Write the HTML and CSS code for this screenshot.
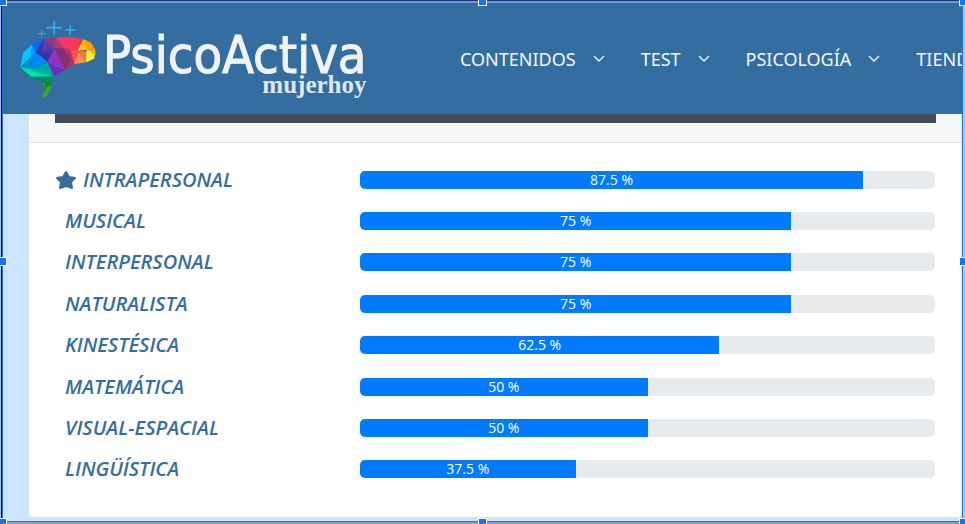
FILE: index.html
```
<!DOCTYPE html>
<html lang="es">
<head>
<meta charset="utf-8">
<meta name="viewport" content="width=device-width, initial-scale=1">
<title>PsicoActiva</title>
<link rel="stylesheet" href="styles.css">
</head>
<body>
<div class="frame">
  <header class="header">
    <a class="brand" href="#">
      <svg class="brain" viewBox="15 10 231 234" aria-hidden="true">
        <g stroke="#28b4f0" stroke-width="5" fill="none">
          <path d="M94 33h47M118 12v41"/>
          <path d="M150 40h31M166 26v28" stroke-width="4"/>
          <path d="M68 51h24M80 40v22" stroke-width="3"/>
        </g>
        <path fill="#00c3ff" d="M52 83 24 108 16 151 48 120z"/>
        <path fill="#008bd0" d="M48 120 16 151 50 156z"/>
        <path fill="#0064ff" d="M85 68 52 83 48 120 80 97z"/>
        <path fill="#009dff" d="M52 83 66 104 48 120z"/>
        <path fill="#0087ff" d="M62 107 98 136 50 156 48 120z"/>
        <path fill="#0068ff" d="M52 83 85 68 64 108z"/>
        <path fill="#3b37aa" d="M85 68 62 107 98 136 118 95z"/>
        <path fill="#293aa0" d="M85 68 80 112 98 136z"/>
        <path fill="#523eb0" d="M85 68 118 95 80 112z"/>
        <path fill="#9b3578" d="M85 68 125 63 118 95z"/>
        <path fill="#b33a6e" d="M125 63 145 95 118 95z"/>
        <path fill="#852e70" d="M118 95 145 95 168 128 150 160z"/>
        <path fill="#9632c3" d="M118 95 150 160 98 138z"/>
        <path fill="#6830b8" d="M98 138 150 160 118 178z"/>
        <path fill="#ff3366" d="M125 63 150 60 184 63 166 98 145 95z"/>
        <path fill="#c52d68" d="M145 95 166 98 178 142 168 128z"/>
        <path fill="#b72d63" d="M168 128 178 142 150 160z"/>
        <path fill="#ef3a55" d="M184 63 205 68 188 102 166 98z"/>
        <path fill="#ff4b51" d="M166 98 188 102 214 103 178 142z"/>
        <path fill="#ff914f" d="M190 108 214 137 178 142z"/>
        <path fill="#ff762f" d="M190 108 214 102 214 137z"/>
        <path fill="#ffc400" d="M205 68 229 79 218 99 188 102z"/>
        <path fill="#ff9e00" d="M205 68 229 79 241 99 216 98z"/>
        <path fill="#ffe332" d="M216 98 241 108 238 125 214 137z"/>
        <path fill="#ffb000" d="M216 98 241 99 241 115z"/>
        <path fill="#fff238" d="M214 104 238 125 214 137z"/>
        <path fill="#00aaa0" d="M98 138 116 179 50 156z"/>
        <path fill="#00c994" d="M16 151 50 156 116 179 108 184 50 180z"/>
        <path fill="#00e5b0" d="M16 151 80 174 116 179 48 180z"/>
        <path fill="#008b75" d="M48 180 116 179 109 193 76 193z"/>
        <path fill="#158343" d="M76 193 109 193 112 211 88 204z"/>
        <path fill="#35a832" d="M83 199 112 211 95 240 81 242 90 221z"/>
        <path fill="#158c20" d="M88 204 109 196 90 222z"/>
      </svg>
      <span class="wordmark">
        <span class="name">PsicoActiva</span>
        <span class="partner">mujerhoy</span>
      </span>
    </a>
    <nav class="menu">
      <a href="#">CONTENIDOS <svg viewBox="0 0 12 8" aria-hidden="true"><path d="M1 1l5 5 5-5"/></svg></a>
      <a href="#">TEST <svg viewBox="0 0 12 8" aria-hidden="true"><path d="M1 1l5 5 5-5"/></svg></a>
      <a href="#">PSICOLOGÍA <svg viewBox="0 0 12 8" aria-hidden="true"><path d="M1 1l5 5 5-5"/></svg></a>
      <a href="#">TIENDA</a>
    </nav>
  </header>
  <main class="card">
    <div class="card-head"><div class="banner"></div></div>
    <div class="results">
      <div class="row"><span class="label top"><svg viewBox="0 0 22 20" aria-hidden="true"><path d="M11 2l3 5 6 1-4 4 1 6-6-2-6 2 1-6-4-4 6-1z"/></svg>INTRAPERSONAL</span><div class="track"><div class="bar" style="width:87.5%">87.5 %</div></div></div>
      <div class="row"><span class="label">MUSICAL</span><div class="track"><div class="bar" style="width:75%">75 %</div></div></div>
      <div class="row"><span class="label">INTERPERSONAL</span><div class="track"><div class="bar" style="width:75%">75 %</div></div></div>
      <div class="row"><span class="label">NATURALISTA</span><div class="track"><div class="bar" style="width:75%">75 %</div></div></div>
      <div class="row"><span class="label">KINESTÉSICA</span><div class="track"><div class="bar" style="width:62.5%">62.5 %</div></div></div>
      <div class="row"><span class="label">MATEMÁTICA</span><div class="track"><div class="bar" style="width:50%">50 %</div></div></div>
      <div class="row"><span class="label">VISUAL-ESPACIAL</span><div class="track"><div class="bar" style="width:50%">50 %</div></div></div>
      <div class="row"><span class="label">LINGÜÍSTICA</span><div class="track"><div class="bar" style="width:37.5%">37.5 %</div></div></div>
    </div>
  </main>
</div>
<div class="selection" aria-hidden="true">
  <i class="handle nw"></i><i class="handle n"></i><i class="handle ne"></i>
  <i class="handle w"></i><i class="handle e"></i>
  <i class="handle sw"></i><i class="handle s"></i><i class="handle se"></i>
</div>
</body>
</html>
```
FILE: styles.css
```
* { box-sizing: border-box; }
body {
  margin: 0;
  background: #a8c7fa;
  font-family: "Open Sans", "Noto Sans", sans-serif;
}
.frame {
  display: flex;
  flex-direction: column;
  min-height: 100vh;
  padding: 3px;
  background: #cbe5ff;
  overflow: hidden;
}
.header {
  display: flex;
  align-items: center;
  height: 111px;
  flex: none;
  background: #346ea0;
  overflow: hidden;
}
.brand {
  display: flex;
  align-items: center;
  flex: none;
  width: 457px;
  padding-left: 17px;
  color: #f2f2f2;
  text-decoration: none;
}
.brain { width: 77px; height: 78px; flex: none; }
.wordmark {
  display: flex;
  flex-direction: column;
  padding: 4px 0 0 6px;
}
.name {
  font: 52px/48px "DejaVu Sans Condensed", "Open Sans", sans-serif;
  -webkit-text-stroke: 1px #f2f2f2;
}
.partner {
  align-self: flex-end;
  color: #dfe7ef;
  font: bold 25px/12px "Liberation Serif", serif;
}
.menu { display: flex; flex: none; gap: 36px; }
.menu a {
  display: flex;
  align-items: center;
  gap: 17px;
  color: #f4f7fa;
  font-family: "Noto Sans", "Open Sans", sans-serif;
  font-size: 18px;
  line-height: 24px;
  text-decoration: none;
}
.menu svg {
  width: 12px;
  height: 8px;
  fill: none;
  stroke: #f4f7fa;
  stroke-width: 1.4;
}
.card {
  display: flex;
  flex-direction: column;
  flex: 1;
  margin: 0 0 3px 25px;
  border: 1px solid #dfe3e7;
  border-top: 0;
  border-radius: 0 0 5px 5px;
  background: #fff;
}
.card-head {
  height: 29px;
  padding: 0 25px 0 26px;
  background: #f7f7f7;
  border-bottom: 1px solid #dfdfdf;
}
.banner { height: 9px; background: #3f4d5b; }
.results {
  display: flex;
  flex-direction: column;
  flex: 1;
  padding: 16px 26px 27px;
}
.row {
  display: grid;
  grid-template-columns: 305px 1fr;
  align-items: center;
  flex: 1;
}
.label {
  display: flex;
  align-items: center;
  gap: 6px;
  padding-left: 10px;
  color: #346ea0;
  font-size: 20px;
  font-style: italic;
  font-weight: 600;
  line-height: 24px;
}
.top { padding-left: 0; }
.label svg {
  width: 22px;
  height: 20px;
  fill: #346ea0;
  stroke: #346ea0;
  stroke-width: 2;
  stroke-linejoin: round;
}
.track {
  height: 18px;
  border-radius: 5px;
  background: #e8ebee;
  overflow: hidden;
}
.bar {
  height: 18px;
  background: #007bff;
  color: #fff;
  font-size: 14px;
  line-height: 18px;
  text-align: center;
}
.selection {
  position: fixed;
  inset: 0;
  border-style: solid;
  border-width: 1px 2px 2px 1px;
  border-color: #16397c #a8c7fa #8a9db8 #a8c1e4;
  pointer-events: none;
}
.selection::before {
  content: "";
  position: absolute;
  inset: 0;
  border-style: solid;
  border-width: 2px 1px 1px 1px;
  border-color: #6e98cf #1a73e8 #2376d2 #000;
}
.selection::after {
  content: "";
  position: absolute;
  inset: 2px auto 0 1px;
  width: 1px;
  background: #1a73e8;
}
.handle {
  position: absolute;
  z-index: 1;
  width: 9px;
  height: 9px;
  border: 1px solid #fff;
  background: #1a73e8;
}
.nw, .n, .ne { top: -4px; }
.sw, .s, .se { bottom: -5px; }
.nw, .w, .sw { left: -3px; }
.ne, .e, .se { right: -5px; }
.n, .s { left: calc(50% - 4px); }
.w, .e { top: calc(50% - 5px); }
```
